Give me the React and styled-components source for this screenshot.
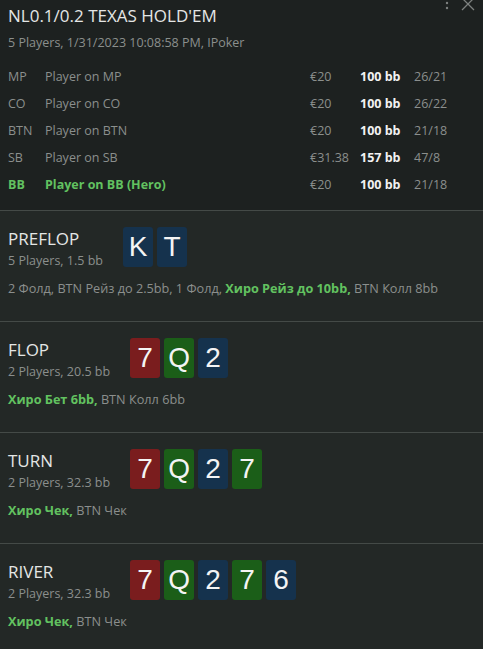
import React from "react";
import styled, { createGlobalStyle } from "styled-components";

const Global = createGlobalStyle`
  html, body { margin: 0; padding: 0; background: #232826; }
  body { font-family: "Open Sans", "Noto Sans", Arial, sans-serif; }
  * { box-sizing: border-box; }
`;

const Panel = styled.div`
  width: 483px;
  min-height: 649px;
  background: #232826;
  position: relative;
  overflow: hidden;
`;

const Header = styled.header`
  background: #1d2120;
  padding: 4px 8px 12px 8px;
  border-bottom: 1px solid #444a47;
`;

const Title = styled.div`
  font-size: 17px;
  font-weight: 400;
  line-height: 24px;
  color: #e4e6e5;
  white-space: nowrap;
`;

const Sub = styled.div`
  margin-top: 5px;
  font-size: 12.5px;
  line-height: 20px;
  color: #8b8f8d;
`;

const Table = styled.div`
  margin-top: 10px;
  display: grid;
  grid-template-columns: 37px 1fr 50px 54px 61px;
  grid-auto-rows: 27px;
  align-items: center;
  font-size: 12.5px;
`;

const Cell = styled.div`
  color: ${(p) => (p.$hero ? "#62c260" : p.$strong ? "#f2f2f2" : "#8b8f8d")};
  font-weight: ${(p) => (p.$hero || p.$strong ? 700 : 400)};
  white-space: nowrap;
`;

const Tools = styled.div`
  position: absolute;
  top: -4px;
  right: 8px;
  display: flex;
  align-items: center;
  gap: 12px;
  color: #7d817f;
`;

const Section = styled.section`
  padding: 16px 8px 23px 8px;
  border-bottom: 1px solid #444a47;
  &:last-child { border-bottom: none; }
`;

const TopRow = styled.div`
  display: flex;
  align-items: flex-start;
  gap: 20px;
`;

const Label = styled.div`
  display: flex;
  flex-direction: column;
`;

const StreetName = styled.div`
  font-size: 17px;
  line-height: 24px;
  color: #e4e6e5;
`;

const StreetSub = styled.div`
  font-size: 12.5px;
  line-height: 20px;
  color: #8b8f8d;
`;

const Cards = styled.div`
  display: flex;
  gap: 4px;
`;

const suitColors = { b: "#15324d", r: "#7a1d1e", g: "#1b5e18" };

const Card = styled.div`
  width: 30px;
  height: 40px;
  border-radius: 3px;
  background: ${(p) => suitColors[p.$suit]};
  color: #f4f4f4;
  font-family: "Liberation Sans", Arial, sans-serif;
  font-size: 28px;
  display: flex;
  align-items: center;
  justify-content: center;
`;

const Actions = styled.div`
  margin-top: 7px;
  font-size: 12.7px;
  line-height: 20px;
  color: #8b8f8d;
  white-space: nowrap;
`;

const Hero = styled.span`
  color: #62c260;
  font-weight: 700;
`;

const players = [
  ["MP", "Player on MP", "€20", "100 bb", "26/21"],
  ["CO", "Player on CO", "€20", "100 bb", "26/22"],
  ["BTN", "Player on BTN", "€20", "100 bb", "21/18"],
  ["SB", "Player on SB", "€31.38", "157 bb", "47/8"],
  ["BB", "Player on BB (Hero)", "€20", "100 bb", "21/18", true],
];

const streets = [
  {
    name: "PREFLOP",
    sub: "5 Players, 1.5 bb",
    cards: [["K", "b"], ["T", "b"]],
    before: "2 Фолд, BTN Рейз до 2.5bb, 1 Фолд, ",
    hero: "Хиро Рейз до 10bb,",
    after: " BTN Колл 8bb",
  },
  {
    name: "FLOP",
    sub: "2 Players, 20.5 bb",
    cards: [["7", "r"], ["Q", "g"], ["2", "b"]],
    before: "",
    hero: "Хиро Бет 6bb,",
    after: " BTN Колл 6bb",
  },
  {
    name: "TURN",
    sub: "2 Players, 32.3 bb",
    cards: [["7", "r"], ["Q", "g"], ["2", "b"], ["7", "g"]],
    before: "",
    hero: "Хиро Чек,",
    after: " BTN Чек",
  },
  {
    name: "RIVER",
    sub: "2 Players, 32.3 bb",
    cards: [["7", "r"], ["Q", "g"], ["2", "b"], ["7", "g"], ["6", "b"]],
    before: "",
    hero: "Хиро Чек,",
    after: " BTN Чек",
  },
];

export default function App() {
  return (
    <>
      <Global />
      <Panel>
        <Tools>
          <svg width="4" height="16" viewBox="0 0 4 16">
            <circle cx="2" cy="2" r="1.2" fill="currentColor" />
            <circle cx="2" cy="7" r="1.2" fill="currentColor" />
            <circle cx="2" cy="12" r="1.2" fill="currentColor" />
          </svg>
          <svg width="14" height="16" viewBox="0 0 14 16">
            <path d="M1 2 L13 14 M13 2 L1 14" stroke="currentColor" strokeWidth="1.3" />
          </svg>
        </Tools>
        <Header>
          <Title>NL0.1/0.2 TEXAS HOLD'EM</Title>
          <Sub>5 Players, 1/31/2023 10:08:58 PM, IPoker</Sub>
          <Table>
            {players.map(([pos, name, eur, bb, st, hero]) => (
              <React.Fragment key={pos}>
                <Cell $hero={hero}>{pos}</Cell>
                <Cell $hero={hero}>{name}</Cell>
                <Cell>{eur}</Cell>
                <Cell $strong>{bb}</Cell>
                <Cell>{st}</Cell>
              </React.Fragment>
            ))}
          </Table>
        </Header>
        {streets.map((s) => (
          <Section key={s.name}>
            <TopRow>
              <Label>
                <StreetName>{s.name}</StreetName>
                <StreetSub>{s.sub}</StreetSub>
              </Label>
              <Cards>
                {s.cards.map(([r, c], i) => (
                  <Card key={i} $suit={c}>{r}</Card>
                ))}
              </Cards>
            </TopRow>
            <Actions>
              {s.before}
              <Hero>{s.hero}</Hero>
              {s.after}
            </Actions>
          </Section>
        ))}
      </Panel>
    </>
  );
}
